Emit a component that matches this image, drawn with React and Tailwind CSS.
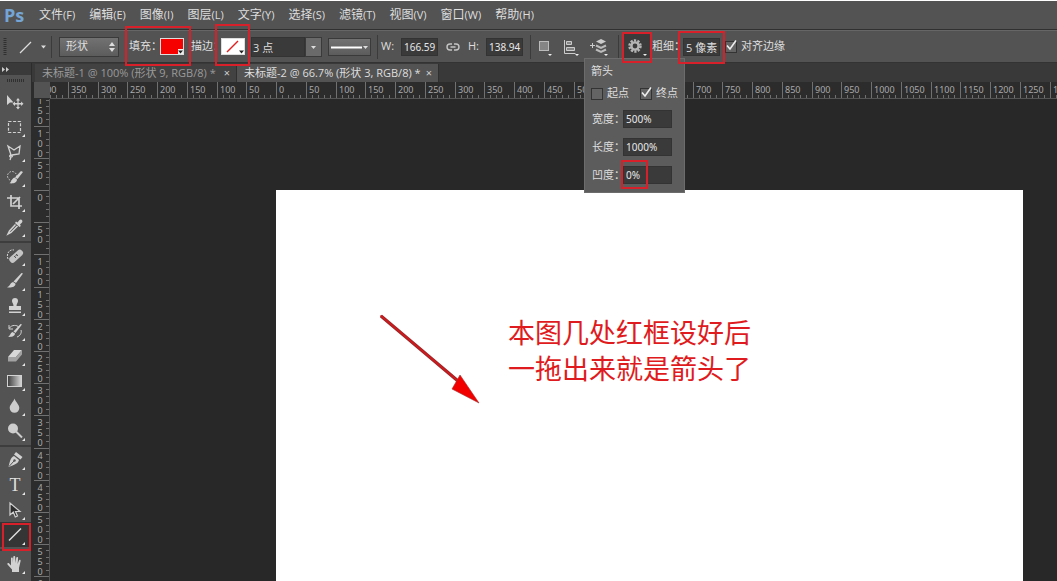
import { useState } from 'react';

const menus = [
  ['文件', 'F'],
  ['编辑', 'E'],
  ['图像', 'I'],
  ['图层', 'L'],
  ['文字', 'Y'],
  ['选择', 'S'],
  ['滤镜', 'T'],
  ['视图', 'V'],
  ['窗口', 'W'],
  ['帮助', 'H'],
];

const icons = {
  move: (
    <>
      <path d="M1 2v10l3-2.5h3.5z" fill="#d2d2d2" />
      <path d="M12 5l2 2.5h-1.4V10h2.5V8.500l2.4 2.200-2.400 2.200v-1.500h-2.500v2.500H14l-2 2.500-2-2.500h1.400v-2.500H9v1.500l-2.400-2.200L9 8.500V10h2.400V7.500H10z" fill="#d2d2d2" />
    </>
  ),
  marquee: <rect x="2.500" y="3.500" width="12" height="11" fill="none" stroke="#d2d2d2" strokeWidth="1.200" strokeDasharray="3 1.600" />,
  lasso: (
    <path d="M5 12L2 3l6 4 6-4-1 8-7 1c-3 0-3 2-1 2s2-3 1-2M5 14l-1 3" fill="none" stroke="#d2d2d2" strokeWidth="1.300" />
  ),
  quick: (
    <>
      <circle cx="6" cy="8" r="4.500" fill="none" stroke="#d2d2d2" strokeDasharray="1.500 1.500" />
      <path d="M17 4l-5.500 7-2.500-1.500L15 3z" fill="#d2d2d2" />
      <path d="M8.500 9.500l2.500 2c0 3.300-4 4.300-7.500 3.800 2-1 2-4.800 5-5.800z" fill="#d2d2d2" />
    </>
  ),
  crop: <path d="M5 2v11h11M1 5h12v11M7 11l7-7" fill="none" stroke="#d2d2d2" strokeWidth="1.700" />,
  dropper: (
    <>
      <path d="M10 3.500l1.500 1 2-2.500c1.500-1.500 4 .5 2.500 2.500l-2 2 .8 1.500-1.300 1L9 5z" fill="#d2d2d2" />
      <path d="M9.500 6.500l-6 6.500L2 16l3-1.500 6.500-6.500" fill="none" stroke="#d2d2d2" strokeWidth="1.500" />
    </>
  ),
  heal: (
    <>
      <path d="M2 12c-2-5 1-10 6-9" fill="none" stroke="#d2d2d2" strokeDasharray="2 1" />
      <rect x="2" y="6" width="16" height="6.500" rx="3" transform="rotate(-42 10 9)" fill="#c4c4c4" />
      <path d="M8 9l2 2M10 7l2 2M9 9.500l2-2" stroke="#585858" />
    </>
  ),
  brush: (
    <>
      <path d="M17 1.500L10 11l-2.500-1.500L15.500 1z" fill="#d2d2d2" />
      <path d="M7 10l2.500 1.700c0 3.300-4.500 4.300-8.500 3.600 3-1 3-4.300 6-5.300z" fill="#d2d2d2" />
    </>
  ),
  stamp: <path d="M9 1a3 3 0 013 3c0 2-1.500 2.500-1.500 5H15v4H3V9h4.500C7.500 6.500 6 6 6 4a3 3 0 013-3zM3 14.500h12V16H3z" fill="#d2d2d2" />,
  history: (
    <>
      <path d="M3 3v4h4M3.500 6c2-3.500 8-3 9-1M15 8c1 3-1 6-4 7" fill="none" stroke="#d2d2d2" />
      <path d="M16 2.500L9.500 11l-2-1.500L14.500 2zM6.500 10l2.500 1.500c0 2.800-3.500 3.800-7 3.300 2.500-1 2-3.800 4.500-4.800z" fill="#d2d2d2" />
    </>
  ),
  eraser: (
    <>
      <path d="M8 3h8L10 10H2z" fill="#d8d8d8" />
      <path d="M2 10h8v4.500H2zM10 10l6-7v4.500l-6 7z" fill="#a2a2a2" />
    </>
  ),
  gradient: (
    <>
      <defs>
        <linearGradient id="toolGradient">
          <stop offset="0" stopColor="#3c3c3c" />
          <stop offset="1" stopColor="#d8d8d8" />
        </linearGradient>
      </defs>
      <rect x="1.500" y="3.500" width="14" height="11" fill="url(#toolGradient)" stroke="#d2d2d2" />
    </>
  ),
  blur: <path d="M8.500 1.500c1 3.500 4.800 6 4.800 9.500a4.800 4.800 0 01-9.600 0c0-3.500 3.800-6 4.800-9.500z" fill="#cdcdcd" />,
  dodge: (
    <>
      <circle cx="7" cy="6.500" r="5" fill="#cdcdcd" />
      <path d="M10 9.500l6 6" stroke="#cdcdcd" strokeWidth="2" />
    </>
  ),
  pen: (
    <>
      <path d="M10 1l6.500 5-2 2.500L8 3.500zM8 5l5 4c-1 4-4.500 4.500-10.500 7C4 10.500 4 7 8 5z" fill="#d2d2d2" />
      <path d="M3 15.500l5-5.500" stroke="#555" />
      <circle cx="8.500" cy="9.500" r="1.200" fill="#555" />
    </>
  ),
  select: <path d="M4 2v12l3.300-3 2 5 2.200-1-2-4.500H14z" fill="#2d2d2d" stroke="#d2d2d2" strokeWidth="1.200" />,
  line: <path d="M3 14.500L15 2.500" stroke="#dedede" strokeWidth="1.500" />,
  hand: (
    <path d="M5 9V3.500c0-1.300 1.800-1.300 1.800 0V8l.5-6c0-1.300 1.900-1.300 1.900 0l.2 6 .8-5.200c.2-1.200 2-1 1.900.3L11.600 9l1.300-3.500c.5-1.200 2-.6 1.700.5L13 13v4H6v-2.500L1.500 9.500C.8 8.200 2.400 7.600 3.200 8.500L5 10.500z" fill="#d2d2d2" />
  ),
  zoom: (
    <>
      <circle cx="8" cy="7" r="5" fill="none" stroke="#d2d2d2" strokeWidth="2" />
      <path d="M11 11l5 5" stroke="#d2d2d2" strokeWidth="2" />
    </>
  ),
};

const toolGroups = [
  [
    ['move', '移动'],
    ['marquee', '矩形选框'],
    ['lasso', '多边形套索'],
    ['quick', '快速选择'],
    ['crop', '裁剪'],
    ['dropper', '吸管'],
  ],
  [
    ['heal', '修复画笔'],
    ['brush', '画笔'],
    ['stamp', '仿制图章'],
    ['history', '历史记录画笔'],
    ['eraser', '橡皮擦'],
    ['gradient', '渐变'],
    ['blur', '模糊'],
    ['dodge', '减淡'],
  ],
  [
    ['pen', '钢笔'],
    ['type', '文字'],
    ['select', '直接选择'],
    ['line', '直线'],
  ],
  [
    ['hand', '抓手'],
    ['zoom', '缩放'],
  ],
];

const tabs = ['未标题-1 @ 100% (形状 9, RGB/8) *', '未标题-2 @ 66.7% (形状 3, RGB/8) *'];

// Each ruler cell covers 50 units; sizes are snapped to whole pixels.
const makeCells = (from, to, step) => {
  const cells = [];
  for (let i = from; i <= to; i++) {
    cells.push({ label: Math.abs(i * 50), size: Math.round((i + 1) * step) - Math.round(i * step) });
  }
  return cells;
};

const columns = makeCells(-8, 26, 29.75);
const rows = makeCells(-3, 12, 32.2);

const field = 'h-[18px] border border-[#333] bg-[#3a3a3a] pl-[2px] font-["Noto_Sans"] text-[10px] text-[#e8e8e8] outline-none';

const Frame = ({ className }) => (
  <span className={`pointer-events-none absolute z-20 border-2 border-[#d8202a] ${className}`} />
);

const Separator = () => <span className="h-6 w-px shrink-0 border-r border-[#3b3b3b]" />;

const Checkbox = ({ id, label, checked, onChange, className = '' }) => (
  <div className={`flex items-center gap-1 ${className}`}>
    <span className="relative flex h-3 w-3">
      <input
        id={id}
        type="checkbox"
        checked={checked}
        onChange={(e) => onChange(e.target.checked)}
        className="h-3 w-3 appearance-none border border-[#333] bg-[#646464]"
      />
      {checked && (
        <svg viewBox="0 0 12 12" className="pointer-events-none absolute -top-px left-0 h-3 w-3">
          <path d="M2 5.500L5 9l6-8.500" fill="none" stroke="#eee" strokeWidth="1.600" />
        </svg>
      )}
    </span>
    <label htmlFor={id}>{label}</label>
  </div>
);

const MenuBar = () => (
  <nav className="flex h-[30px] items-center border-t border-b border-t-white border-b-[#303030] bg-[#535353]">
    <span className="w-8 pl-1 font-['Open_Sans'] text-lg leading-6 font-bold text-[#74a5d6]">Ps</span>
    <div className="flex">
      {menus.map(([name, key]) => (
        <button key={key} className="px-[7px] whitespace-nowrap">
          {name}
          <span className="text-[11px]">({key})</span>
        </button>
      ))}
    </div>
  </nav>
);

const ArrowOptions = () => {
  const [start, setStart] = useState(false);
  const [end, setEnd] = useState(true);
  return (
    <div className="absolute top-6 -left-[39px] z-10 flex h-[135px] w-[101px] flex-col border border-[#6c6c6c] bg-[#5c5c5c] px-[6px]">
      <h2 className="pt-[3px] leading-[18px]">箭头</h2>
      <div className="flex h-8 items-center justify-between">
        <Checkbox id="start" label="起点" checked={start} onChange={setStart} />
        <Checkbox id="end" label="终点" checked={end} onChange={setEnd} />
      </div>
      {[
        ['arrowWidth', '宽度：', '500%'],
        ['arrowLength', '长度：', '1000%'],
        ['concavity', '凹度：', '0%'],
      ].map(([id, label, value]) => (
        <div key={id} className="relative flex h-7 shrink-0 items-start pt-[2px]">
          <label htmlFor={id} className="w-8 shrink-0 pl-px leading-[18px] whitespace-nowrap">{label}</label>
          <input id={id} defaultValue={value} className={`${field} w-[49px]`} />
          {id === 'concavity' && <Frame className="-top-1 left-[30px] h-[29px] w-[27px]" />}
        </div>
      ))}
    </div>
  );
};

const OptionsBar = () => {
  const [align, setAlign] = useState(true);
  return (
    <section className="flex h-[33px] shrink-0 items-center border-t border-b border-t-[#666] border-b-[#333] bg-[#535353] text-[11px] whitespace-nowrap">
      <svg viewBox="0 0 59 24" className="h-6 w-[59px] shrink-0">
        <path d="M5 3v18" stroke="#303030" strokeWidth="3" strokeDasharray="1 1" />
        <path d="M20 18L31 7" stroke="#ddd" strokeWidth="1.300" />
        <path d="M41 10.500h5l-2.500 3z" fill="#ddd" />
        <path d="M51.500 1v22" stroke="#3b3b3b" />
      </svg>
      <div className="relative w-[60px] shrink-0">
        <select aria-label="模式" className="h-5 w-full appearance-none border border-[#3a3a3a] bg-linear-to-b from-[#727272] to-[#5c5c5c] pl-[6px] outline-none">
          <option>形状</option>
        </select>
        <svg viewBox="0 0 6 10" className="pointer-events-none absolute top-[5px] right-1 h-[10px] w-[6px]">
          <path d="M0 4l3-4 3 4zM0 6l3 4 3-4z" fill="#ddd" />
        </svg>
      </div>
      <div className="relative ml-2 flex w-16 shrink-0 items-center pl-[2px]">
        <span className="w-[31px]">填充：</span>
        <button aria-label="填充" className="h-[17px] w-6 border border-[#ddd] bg-[#f70000]">
          <svg viewBox="0 0 22 15">
            <path d="M17 10h5v5h-5z" fill="#f0f0f0" />
            <path d="M17 11.500h5l-2.500 3z" fill="#222" />
          </svg>
        </button>
        <Frame className="-top-3 -left-[2px] h-10 w-[66px]" />
      </div>
      <div className="relative flex w-[60px] shrink-0 items-center">
        <span className="w-[30px]">描边：</span>
        <button aria-label="描边" className="h-[17px] w-6 border border-[#ddd] bg-white">
          <svg viewBox="0 0 22 15">
            <path d="M5 13L16 2" stroke="#d22" strokeWidth="1.500" />
            <path d="M17 11.500h5l-2.500 3z" fill="#222" />
          </svg>
        </button>
        <Frame className="-top-[14px] left-6 h-[42px] w-[35px]" />
      </div>
      <div className="flex w-[71px] shrink-0">
        <input aria-label="描边宽度" defaultValue="3 点" className="h-5 w-[54px] border border-[#333] bg-[#3a3a3a] px-px outline-none" />
        <button aria-label="宽度列表" className="h-5 w-[17px] border border-[#3a3a3a] bg-[#6a6a6a]">
          <svg viewBox="0 0 15 18">
            <path d="M5 8h5l-2.500 3z" fill="#ddd" />
          </svg>
        </button>
      </div>
      <button aria-label="描边类型" className="mx-[6px] h-[18px] w-[43px] shrink-0 border border-[#3a3a3a] bg-linear-to-b from-[#727272] to-[#5c5c5c]">
        <svg viewBox="0 0 41 16">
          <path d="M2 8.500h31" stroke="#fff" strokeWidth="2" />
          <path d="M34 7h5l-2.500 3z" fill="#ddd" />
        </svg>
      </button>
      <Separator />
      <label htmlFor="shapeW" className="w-[23px] shrink-0 pl-[3px]">W:</label>
      <input id="shapeW" defaultValue="166.59" className={`${field} w-[37px] shrink-0`} />
      <svg viewBox="0 0 14 10" className="mx-2 h-[10px] w-[14px] shrink-0" fill="none" stroke="#c4c4c4" strokeWidth="1.400">
        <path d="M6 2H4a3 3 0 000 6h2M8 2h2a3 3 0 010 6H8M4.500 5h5" />
      </svg>
      <label htmlFor="shapeH" className="w-[18px] shrink-0">H:</label>
      <input id="shapeH" defaultValue="138.94" className={`${field} w-[37px] shrink-0`} />
      <div className="ml-[7px] flex shrink-0 items-center">
        <Separator />
        <button aria-label="路径操作" className="ml-[6px] w-[26px]">
          <svg viewBox="0 0 26 20" className="h-5 w-[26px]">
            <rect x="2.500" y="4.500" width="9" height="9" fill="#858585" stroke="#bbb" />
            <path d="M11 17h4l-2 2z" fill="#eee" />
          </svg>
        </button>
        <button aria-label="路径对齐方式" className="w-[27px]">
          <svg viewBox="0 0 27 20" className="h-5 w-[27px]">
            <path d="M1.500 3v13.500h11" stroke="#ccc" fill="none" />
            <path d="M3.500 4.500h5v3h-5zM3.500 10.500h8v3h-8z" fill="#858585" stroke="#ccc" />
            <path d="M12 17h4l-2 2z" fill="#eee" />
          </svg>
        </button>
        <button aria-label="路径排列方式" className="w-7">
          <svg viewBox="0 0 28 20" className="h-5 w-7">
            <path d="M0 8.500h5M2.500 6v5" stroke="#ccc" />
            <path d="M11 2l5 2.500-5 2.500-5-2.500z" fill="#ccc" />
            <path d="M6 8.500l5 2.500 5-2.500M6 12.500l5 2.500 5-2.500" fill="none" stroke="#bbb" strokeWidth="2" />
            <path d="M14 17h4l-2 2z" fill="#eee" />
          </svg>
        </button>
        <Separator />
      </div>
      <div className="relative ml-1 shrink-0">
        <button aria-label="几何选项" className="flex h-[26px] w-7 items-center bg-[#3b3b3b] pl-1">
          <svg viewBox="0 0 22 22" className="h-[22px] w-[22px]">
            <circle cx="8" cy="10" r="5.500" fill="none" stroke="#b5b5b5" strokeWidth="2.500" strokeDasharray="2.200 1.256" />
            <circle cx="8" cy="10" r="3.600" fill="none" stroke="#b5b5b5" strokeWidth="2.400" />
            <path d="M16 18h4l-2 2z" fill="#eee" />
          </svg>
        </button>
        <Frame className="-top-[2px] -left-px h-[31px] w-[30px]" />
        <ArrowOptions />
      </div>
      <div className="relative flex shrink-0 items-center pl-px">
        <label htmlFor="weight" className="w-[31px]">粗细：</label>
        <input id="weight" defaultValue="5 像素" className="h-[18px] w-[37px] border border-[#333] bg-[#3a3a3a] pl-[2px] outline-none" />
        <Frame className="-top-[7px] left-[27px] h-[33px] w-[47px]" />
      </div>
      <Checkbox id="align" label="对齐边缘" checked={align} onChange={setAlign} className="ml-[5px] shrink-0" />
    </section>
  );
};

const Toolbar = () => (
  <aside className="w-8 shrink-0 border-r border-[#2c2c2c] bg-[#535353]">
    <div className="flex h-3 items-center bg-[#3a3a3a] pl-0.5">
      <svg viewBox="0 0 8 5" className="h-[5px] w-2">
        <path d="M0 0l3 2.500L0 5zM4 0l3 2.500L4 5z" fill="#ccc" />
      </svg>
    </div>
    <svg viewBox="0 0 31 14" className="h-[14px] w-[31px]">
      <path d="M7 5.500h17" stroke="#303030" strokeWidth="3" strokeDasharray="1 1" />
    </svg>
    {toolGroups.map((group, i) => (
      <div key={i} className={i > 0 ? 'mt-[2px] border-t-2 border-[#3d3d3d]' : ''}>
        {group.map(([name, label]) => (
          <button
            key={name}
            aria-label={label}
            className={`relative flex h-[25px] w-full items-center pl-[6px] ${name === 'line' ? 'bg-[#353535]' : ''}`}
          >
            {name === 'type' ? (
              <span className="w-[18px] text-center font-['Liberation_Serif'] text-lg leading-6">T</span>
            ) : (
              <svg viewBox="0 0 18 18" className="h-[18px] w-[18px]">{icons[name]}</svg>
            )}
            {name !== 'move' && (
              <svg viewBox="0 0 4 4" className="absolute right-[6px] bottom-0.5 h-[3px] w-[3px]">
                <path d="M4 0v4H0z" fill="#e8e8e8" />
              </svg>
            )}
            {name === 'line' && <Frame className="top-px right-0 left-[2px] h-7" />}
          </button>
        ))}
      </div>
    ))}
  </aside>
);

const TabBar = () => (
  <div className="flex h-[19px] shrink-0 bg-[#393939] pt-px pl-[3px]">
    {tabs.map((title, i) => (
      <div
        key={title}
        className={`flex w-[202px] items-center justify-between border-r border-[#303030] pr-[6px] pl-[7px] whitespace-nowrap ${i === 1 ? 'bg-[#535353] text-[#dedede]' : 'bg-[#424242] text-[#9a9a9a]'}`}
      >
        <button className="text-[11px] leading-4">{title}</button>
        <button aria-label="关闭" className="text-[11px] leading-4 text-[#cfcfcf]">×</button>
      </div>
    ))}
  </div>
);

const HorizontalRuler = () => (
  <div className="h-[17px] min-w-0 flex-1 overflow-hidden border-b border-[#555]">
    <div className="-ml-3 flex">
      {columns.map(({ label, size }, i) => (
        <div key={i} className="relative h-4 shrink-0 border-l border-[#707070]" style={{ width: size }}>
          <span className="block pl-[2px] leading-4">{label}</span>
          <div className="absolute inset-x-0 bottom-0 flex h-[3px] justify-evenly">
            {[1, 2, 3, 4].map((t) => (
              <span key={t} className="w-px bg-[#707070]" />
            ))}
          </div>
        </div>
      ))}
    </div>
  </div>
);

const VerticalRuler = () => (
  <div className="w-4 shrink-0 overflow-hidden border-r border-[#555]">
    <div className="-mt-[6px]">
      {rows.map(({ label, size }, i) => (
        <div key={i} className="relative flex border-t border-[#707070] pl-[2px]" style={{ height: size }}>
          <span className="w-2 pt-0.5 text-center leading-[10px]">
            {String(label).split('').map((digit, n) => (
              <span key={n} className="block">{digit}</span>
            ))}
          </span>
          <div className="absolute inset-y-0 right-0 flex w-[3px] flex-col justify-evenly">
            {[1, 2, 3, 4].map((t) => (
              <span key={t} className="h-px bg-[#707070]" />
            ))}
          </div>
        </div>
      ))}
    </div>
  </div>
);

const Canvas = () => (
  <main className="flex min-w-0 flex-1 bg-[#282828] pt-[91px] pr-[34px] pl-[226px]">
    <div className="flex flex-1 items-start gap-[27px] bg-white pt-[124px] pl-[103px]">
      <svg viewBox="0 0 102 92" className="h-[92px] w-[102px] shrink-0">
        <path d="M2 2L79 67" stroke="#8a2c2c" strokeWidth="3.400" />
        <path d="M1.500 1.500L79 67" stroke="#d0191d" strokeWidth="1.800" />
        <path d="M81 61L100 89L73 75L77 68z" fill="#f20000" stroke="#a03030" strokeWidth="0.600" />
      </svg>
      <p className="font-['Noto_Sans_CJK_SC',sans-serif] text-[27px] leading-9 whitespace-nowrap text-[#e01b20]">
        本图几处红框设好后
        <br />
        一拖出来就是箭头了
      </p>
    </div>
  </main>
);

const App = () => {
  return (
    <div className="flex h-screen flex-col overflow-hidden bg-[#282828] font-['Open_Sans','Noto_Sans_CJK_SC',sans-serif] text-xs text-[#dedede]">
      <MenuBar />
      <OptionsBar />
      <div className="flex min-h-0 flex-1">
        <Toolbar />
        <div className="flex min-w-0 flex-1 flex-col">
          <TabBar />
          <div className="flex min-h-0 flex-1 flex-col bg-[#2c2c2c] pl-[2px] font-['Noto_Sans'] text-[9px] text-[#aaa]">
            <div className="flex">
              <span className="h-4 w-4 shrink-0 bg-[#535353]" />
              <HorizontalRuler />
            </div>
            <div className="flex min-h-0 flex-1">
              <VerticalRuler />
              <Canvas />
            </div>
          </div>
        </div>
      </div>
    </div>
  );
};

export default App;
